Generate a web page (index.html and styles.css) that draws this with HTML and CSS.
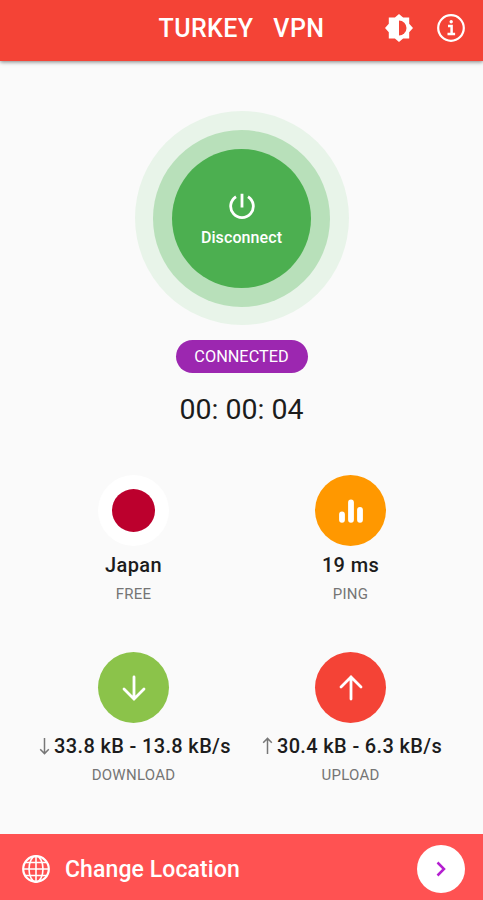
FILE: index.html
```html
<!DOCTYPE html>
<html lang="en">
<head>
    <meta charset="UTF-8">
    <meta name="viewport" content="width=device-width, initial-scale=1.0">
    <title>Turkey VPN</title>
    <link rel="stylesheet" href="styles.css">
</head>
<body>
    <header class="header">
        <h1>TURKEY&nbsp;&nbsp;&nbsp;VPN</h1>
        <div class="actions">
            <svg class="theme-icon" viewBox="0 0 28 28">
                <path fill="#fff" d="M14 0l4.1 3.6H24.2v6.2l3.8 4.2-3.8 4.2v6.2h-6.1L14 28l-4.1-3.6H3.8v-6.2L0 14l3.8-4.2V3.6h6.1z"/>
                <path fill="#f44336" d="M14 6.5a7.5 7.5 0 0 1 0 15z"/>
            </svg>
            <svg class="info-icon" viewBox="0 0 28 28" fill="none" stroke="#fff">
                <circle cx="14" cy="14" r="12.8" stroke-width="2.2"/>
                <path stroke-width="2.5" d="M11 12h3.6v8M10.5 20.1h7.6"/>
                <circle cx="14.2" cy="7.8" r="1.7" fill="#fff" stroke="none"/>
            </svg>
        </div>
    </header>

    <main class="content">
        <div class="ring">
            <div class="ring-inner">
                <button class="power">
                    <svg viewBox="0 0 26 26" fill="none" stroke="#fff" stroke-width="2.8">
                        <path d="M13 0.8v13.7M7 3.7a11.3 11.3 0 1 0 12 0"/>
                    </svg>
                    <span>Disconnect</span>
                </button>
            </div>
        </div>
        <div class="status">CONNECTED</div>
        <div class="timer">00: 00: 04</div>

        <div class="stats">
            <div class="stat">
                <div class="circle flag"><div class="sun"></div></div>
                <div class="value">Japan</div>
                <div class="label">FREE</div>
            </div>
            <div class="stat">
                <div class="circle orange">
                    <svg viewBox="0 0 26 26" stroke="#fff" stroke-width="5.8" stroke-linecap="round">
                        <path d="M4 16.5v5.3M13 4.5v17.3M22 12v9.8"/>
                    </svg>
                </div>
                <div class="value">19 ms</div>
                <div class="label">PING</div>
            </div>
            <div class="stat traffic">
                <div class="circle green">
                    <svg viewBox="0 0 26 26" fill="none" stroke="#fff" stroke-width="2.8" stroke-linecap="round">
                        <path d="M13 2v22M3 14L13 24l10-10"/>
                    </svg>
                </div>
                <div class="value">
                    <svg class="arrow" viewBox="0 0 11 18"><path d="M5.5 1v15.5M1.2 12.3l4.3 4.3 4.3-4.3"/></svg>
                    <span>33.8 kB - 13.8 kB/s</span>
                </div>
                <div class="label">DOWNLOAD</div>
            </div>
            <div class="stat traffic">
                <div class="circle red">
                    <svg viewBox="0 0 26 26" fill="none" stroke="#fff" stroke-width="2.8" stroke-linecap="round">
                        <path d="M13 24V2M3 12L13 2l10 10"/>
                    </svg>
                </div>
                <div class="value">
                    <svg class="arrow" viewBox="0 0 11 18"><path d="M5.5 17V1.5M1.2 5.7l4.3-4.3 4.3 4.3"/></svg>
                    <span>30.4 kB - 6.3 kB/s</span>
                </div>
                <div class="label">UPLOAD</div>
            </div>
        </div>
    </main>

    <footer class="footer">
        <svg class="globe" viewBox="0 0 28 28" fill="none" stroke="#fff" stroke-width="1.6">
            <circle cx="14" cy="14" r="12.8" stroke-width="2.2"/>
            <ellipse cx="14" cy="14" rx="7" ry="13"/>
            <path d="M14 1v26M1 14h26M3.5 7.5h21M3.5 20.5h21"/>
        </svg>
        <span class="change">Change Location</span>
        <button class="next">
            <svg viewBox="0 0 10 16" fill="none" stroke="#b41fd0" stroke-width="2.5">
                <path d="M1.5 1.5L8 8l-6.5 6.5"/>
            </svg>
        </button>
    </footer>
</body>
</html>
```

FILE: styles.css
```css
* {
    box-sizing: border-box;
}

body {
    margin: 0;
    height: 900px;
    display: flex;
    flex-direction: column;
    font-family: Roboto, sans-serif;
    background: #fafafa;
    color: #1c1c1c;
}

svg {
    display: block;
}

button {
    border: none;
    padding: 0;
    font-family: inherit;
    cursor: pointer;
}

.header {
    height: 61px;
    padding: 0 18px 5px;
    display: grid;
    grid-template-columns: 1fr auto 1fr;
    align-items: center;
    background: #f44336;
    color: #fff;
    box-shadow: 0 1px 4px rgba(0, 0, 0, 0.5);
}

.header h1 {
    grid-column: 2;
    margin: 0;
    padding-top: 1px;
    font-size: 25px;
    font-weight: 500;
    line-height: 30px;
    letter-spacing: 0.4px;
    white-space: pre;
}

.actions {
    display: flex;
    justify-content: flex-end;
    gap: 24px;
}

.theme-icon,
.info-icon {
    width: 28px;
    height: 28px;
}

.content {
    flex: 1;
    display: flex;
    flex-direction: column;
    align-items: center;
    padding-top: 50px;
}

.ring,
.ring-inner,
.power {
    display: flex;
    align-items: center;
    justify-content: center;
    border-radius: 50%;
}

.ring {
    width: 214px;
    height: 214px;
    background: #e8f4e9;
}

.ring-inner {
    width: 177px;
    height: 177px;
    background: #b8e0ba;
}

.power {
    width: 139px;
    height: 139px;
    padding-top: 4px;
    flex-direction: column;
    gap: 9px;
    background: #4caf50;
    color: #fff;
    font-size: 16px;
    font-weight: 500;
    letter-spacing: 0.1px;
}

.power svg {
    width: 26px;
    height: 26px;
}

.status {
    margin-top: 15px;
    width: 132px;
    height: 33px;
    line-height: 33px;
    border-radius: 17px;
    background: #9c27b0;
    color: #fff;
    font-size: 16.3px;
    text-align: center;
}

.timer {
    margin-top: 19px;
    font-size: 28.5px;
    line-height: 36px;
}

.stats {
    width: 434px;
    margin: 47px 0 0 1px;
    display: grid;
    grid-template-columns: 1fr 1fr;
    row-gap: 48px;
}

.stat {
    display: flex;
    flex-direction: column;
    align-items: center;
}

.circle {
    width: 71px;
    height: 71px;
    border-radius: 50%;
    display: flex;
    align-items: center;
    justify-content: center;
}

.circle svg {
    width: 26px;
    height: 26px;
}

.flag {
    background: #fff;
}

.sun {
    width: 43px;
    height: 43px;
    border-radius: 50%;
    background: #bc002d;
}

.orange {
    background: #ff9800;
}

.green {
    background: #8bc34a;
}

.red {
    background: #f44336;
}

.value {
    display: flex;
    align-items: center;
    gap: 4px;
    margin-top: 6px;
    font-size: 20px;
    font-weight: 500;
    line-height: 26px;
    letter-spacing: 0.35px;
    white-space: nowrap;
}

.traffic .value {
    margin-top: 10px;
    padding-left: 3px;
}

.arrow {
    width: 11px;
    height: 18px;
    fill: none;
    stroke: #777;
    stroke-width: 1.5;
}

.label {
    margin-top: 6px;
    font-size: 15px;
    line-height: 20px;
    letter-spacing: 0.25px;
    color: #757575;
}

.footer {
    height: 66px;
    padding: 4px 18px 0 22px;
    display: flex;
    align-items: center;
    background: #ff5252;
    color: #fff;
}

.globe {
    width: 28px;
    height: 28px;
}

.change {
    margin-left: 15px;
    font-size: 23px;
    font-weight: 500;
    letter-spacing: 0.1px;
}

.next {
    margin-left: auto;
    width: 48px;
    height: 48px;
    border-radius: 50%;
    background: #fff;
    display: flex;
    align-items: center;
    justify-content: center;
}

.next svg {
    width: 10px;
    height: 16px;
}
```
